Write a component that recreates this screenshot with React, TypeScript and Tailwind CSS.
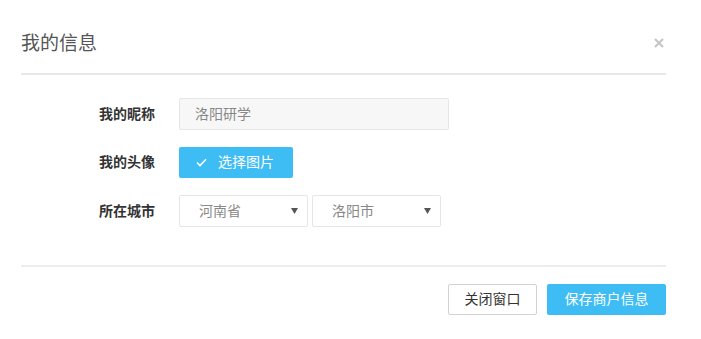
import React from "react";

const font = { fontFamily: '"Liberation Sans", "Noto Sans CJK SC", sans-serif' };

function Caret() {
  return (
    <svg width="7" height="6" viewBox="0 0 7 6" className="shrink-0">
      <path d="M0 0 L7 0 L3.5 6 Z" fill="#555" />
    </svg>
  );
}

export default function App() {
  return (
    <div className="w-[701px] h-[339px] bg-white pl-[21px] pr-[35px]" style={font}>
      <div className="h-[75px] border-b-2 border-[#e8e8e8] flex items-start justify-between pt-[33px] relative">
        <span className="text-[19px] leading-[22px] text-[#555]">我的信息</span>
        <svg
          width="10"
          height="10"
          viewBox="0 0 10 10"
          className="absolute right-[2px] top-[38px]"
        >
          <path d="M1 1 L9 9 M9 1 L1 9" stroke="#c4c4c4" strokeWidth="2" />
        </svg>
      </div>
      <div className="pt-[23px] flex flex-col gap-[17px] h-[190px]">
        <div className="flex items-center h-[32px]">
          <div className="w-[134px] text-right text-[14px] font-bold text-[#333]">我的昵称</div>
          <div className="ml-[24px] w-[270px] h-[32px] bg-[#f7f7f7] border border-[#e6e6e6] rounded-[2px] flex items-center pl-[15px] text-[14px] text-[#888]">
            洛阳研学
          </div>
        </div>
        <div className="flex items-center h-[31px]">
          <div className="w-[134px] text-right text-[14px] font-bold text-[#333]">我的头像</div>
          <div className="ml-[24px] w-[114px] h-[31px] bg-[#3ebdf4] rounded-[2px] flex items-center pl-[17px] text-[14px] text-white">
            <svg width="11" height="9" viewBox="0 0 11 9" className="mr-[11px]">
              <path d="M1 4.5 L4 7.5 L10 1.2" stroke="white" strokeWidth="1.6" fill="none" />
            </svg>
            选择图片
          </div>
        </div>
        <div className="flex items-center h-[32px]">
          <div className="w-[134px] text-right text-[14px] font-bold text-[#333]">所在城市</div>
          <div className="ml-[24px] w-[129px] h-[32px] bg-white border border-[#e6e6e6] rounded-[2px] flex items-center justify-between pl-[19px] pr-[9px] text-[14px] text-[#888]">
            <span>河南省</span>
            <Caret />
          </div>
          <div className="ml-[4px] w-[129px] h-[32px] bg-white border border-[#e6e6e6] rounded-[2px] flex items-center justify-between pl-[19px] pr-[9px] text-[14px] text-[#888]">
            <span>洛阳市</span>
            <Caret />
          </div>
        </div>
      </div>
      <div className="border-t-2 border-[#ededed] pt-[17px] flex justify-end gap-[10px]">
        <div className="w-[89px] h-[31px] border border-[#d2d2d2] rounded-[2px] bg-white flex items-center justify-center text-[14px] text-[#333]">
          关闭窗口
        </div>
        <div className="w-[119px] h-[31px] bg-[#3ebdf4] rounded-[2px] flex items-center justify-center text-[14px] text-white">
          保存商户信息
        </div>
      </div>
    </div>
  );
}
